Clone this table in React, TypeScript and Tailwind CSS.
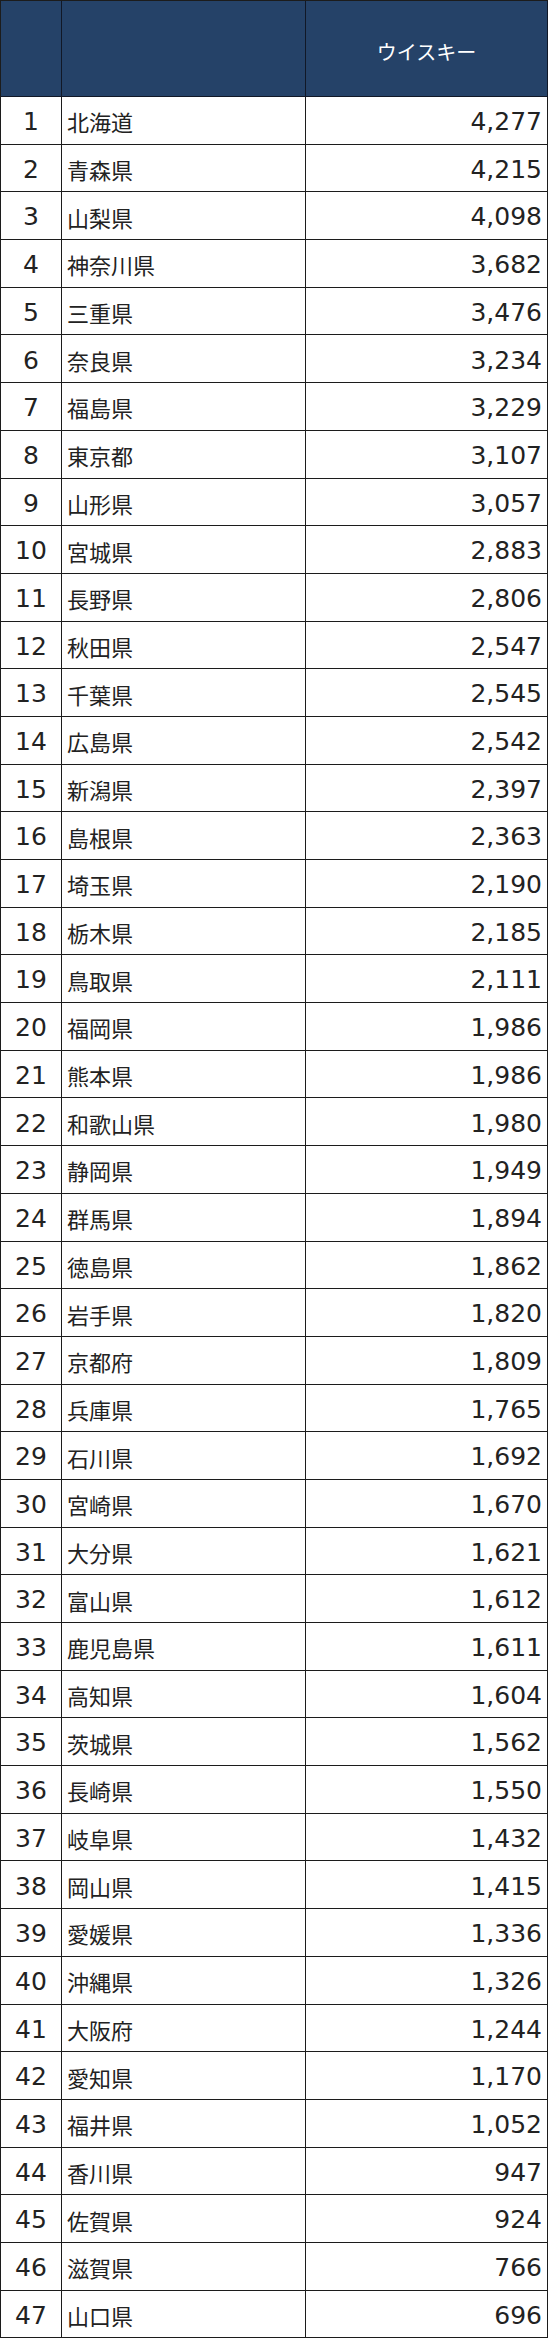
const rows: [string, string][] = [
  ['北海道', '4,277'],
  ['青森県', '4,215'],
  ['山梨県', '4,098'],
  ['神奈川県', '3,682'],
  ['三重県', '3,476'],
  ['奈良県', '3,234'],
  ['福島県', '3,229'],
  ['東京都', '3,107'],
  ['山形県', '3,057'],
  ['宮城県', '2,883'],
  ['長野県', '2,806'],
  ['秋田県', '2,547'],
  ['千葉県', '2,545'],
  ['広島県', '2,542'],
  ['新潟県', '2,397'],
  ['島根県', '2,363'],
  ['埼玉県', '2,190'],
  ['栃木県', '2,185'],
  ['鳥取県', '2,111'],
  ['福岡県', '1,986'],
  ['熊本県', '1,986'],
  ['和歌山県', '1,980'],
  ['静岡県', '1,949'],
  ['群馬県', '1,894'],
  ['徳島県', '1,862'],
  ['岩手県', '1,820'],
  ['京都府', '1,809'],
  ['兵庫県', '1,765'],
  ['石川県', '1,692'],
  ['宮崎県', '1,670'],
  ['大分県', '1,621'],
  ['富山県', '1,612'],
  ['鹿児島県', '1,611'],
  ['高知県', '1,604'],
  ['茨城県', '1,562'],
  ['長崎県', '1,550'],
  ['岐阜県', '1,432'],
  ['岡山県', '1,415'],
  ['愛媛県', '1,336'],
  ['沖縄県', '1,326'],
  ['大阪府', '1,244'],
  ['愛知県', '1,170'],
  ['福井県', '1,052'],
  ['香川県', '947'],
  ['佐賀県', '924'],
  ['滋賀県', '766'],
  ['山口県', '696'],
]

const font = "font-['DejaVu_Sans','Noto_Sans_CJK_JP',sans-serif]"

export default function App() {
  return (
    <div className="w-[550px] bg-white">
      <div className={`w-[548px] border-l border-t border-[#1c1c1c] text-[#222] ${font}`}>
        {/* header */}
        <div className="grid h-[96px] grid-cols-[61px_244px_1fr] bg-[#254268]">
          <div className="border-b border-r border-[#111827]" />
          <div className="border-b border-r border-[#111827]" />
          <div className="flex items-center justify-center border-b border-r border-[#111827] pt-[6px] font-['Noto_Sans_CJK_JP',sans-serif] text-[20px] text-white">
            ウイスキー
          </div>
        </div>

        {rows.map(([pref, value], i) => (
          <div key={i} className="grid h-[47.7px] grid-cols-[61px_244px_1fr]">
            <div className="flex items-center justify-center border-b border-r border-[#1c1c1c] pt-[3px] text-[25px]">
              {i + 1}
            </div>
            <div className="flex items-center border-b border-r border-[#1c1c1c] pl-[5px] pt-[3px] font-['Noto_Sans_CJK_JP',sans-serif] text-[22px]">
              {pref}
            </div>
            <div className="flex items-center justify-end border-b border-r border-[#1c1c1c] pr-[5px] pt-[3px] text-[25px]">
              {value}
            </div>
          </div>
        ))}
      </div>
    </div>
  )
}
